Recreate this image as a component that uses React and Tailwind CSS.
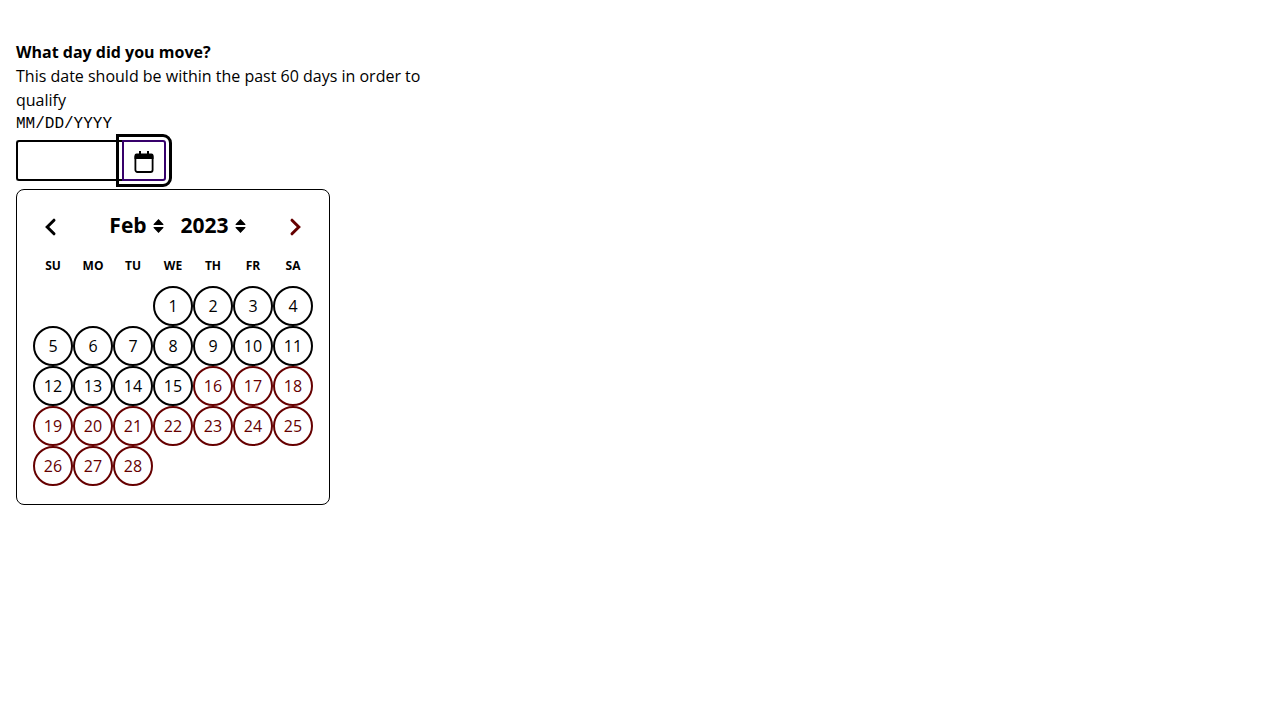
import { useState } from "react";

const MONTHS = ["Jan", "Feb", "Mar", "Apr", "May", "Jun", "Jul", "Aug", "Sep", "Oct", "Nov", "Dec"];
const YEARS = ["2022", "2023"];
const WEEKDAYS = ["SU", "MO", "TU", "WE", "TH", "FR", "SA"];
const WEEKS = [
  [null, null, null, 1, 2, 3, 4],
  [5, 6, 7, 8, 9, 10, 11],
  [12, 13, 14, 15, 16, 17, 18],
  [19, 20, 21, 22, 23, 24, 25],
  [26, 27, 28, null, null, null, null],
];
const LAST_AVAILABLE = 15;

function CalendarIcon() {
  return (
    <svg viewBox="0 0 20 22" className="h-[22px] w-5" fill="none" aria-hidden="true">
      <rect x="1.4" y="4" width="17.2" height="17" rx="2" stroke="currentColor" strokeWidth="1.8" />
      <path d="M0.5 8V4.500a2 2 0 0 1 2-2h15a2 2 0 0 1 2 2V8z" fill="currentColor" />
      <path d="M6 0V5M14 0V5" stroke="currentColor" strokeWidth="2" />
    </svg>
  );
}

function Chevron({ direction }) {
  return (
    <svg viewBox="0 0 12 18" className="h-[18px] w-3" fill="none" aria-hidden="true">
      <path
        d={direction === "left" ? "M9 2.200 2.200 9l6.800 6.800" : "M3 2.200 9.800 9l-6.800 6.800"}
        stroke="currentColor"
        strokeWidth="3"
        strokeLinecap="round"
      />
    </svg>
  );
}

function SortIcon() {
  return (
    <svg viewBox="0 0 12 14" className="h-3.5 w-3" fill="currentColor" aria-hidden="true">
      <path d="M5.500 0 10.500 5.200Q10.700 6 9.900 6H1.100Q0.300 6 0.500 5.200zM5.500 14 10.500 8.800Q10.700 8 9.900 8H1.100Q0.300 8 0.500 8.800z" />
    </svg>
  );
}

function PickerSelect({ label, value, options, onChange }) {
  return (
    <div className="flex items-center gap-1.5">
      <select
        aria-label={label}
        value={value}
        onChange={(e) => onChange(e.target.value)}
        className="field-sizing-content h-9 appearance-none bg-transparent text-[21px] leading-normal font-bold"
      >
        {options.map((o) => (
          <option key={o}>{o}</option>
        ))}
      </select>
      <SortIcon />
    </div>
  );
}

export default function App() {
  const [date, setDate] = useState("");
  const [month, setMonth] = useState("Feb");
  const [year, setYear] = useState("2023");

  return (
    <main className="max-w-[460px] px-4 pt-10 font-['Open_Sans','Noto_Sans',sans-serif] text-base text-black">
      <label htmlFor="move-date" className="block font-bold">What day did you move?</label>
      <p>This date should be within the past 60 days in order to qualify</p>
      <p className="font-['Liberation_Mono',monospace]">MM/DD/YYYY</p>

      <div className="mt-1 flex h-[41px]">
        <input
          id="move-date"
          type="text"
          value={date}
          onChange={(e) => setDate(e.target.value)}
          className="w-[106px] rounded-l-[3px] border-2 border-r-0 border-black px-2 outline-none"
        />
        <button
          type="button"
          aria-label="Toggle calendar"
          className="flex w-11 items-center justify-center rounded-r-[3px] border-2 border-[#36006b] pt-0.5 outline-3 outline-offset-3 outline-black"
        >
          <CalendarIcon />
        </button>
      </div>

      <section aria-label="Calendar" className="mt-2 w-fit rounded-lg border border-black px-4 pt-4 pb-[18px]">
        <div className="flex h-10 items-center justify-between">
          <button type="button" aria-label="Previous month" className="flex size-9 items-center justify-center pt-0.5">
            <Chevron direction="left" />
          </button>
          <div className="flex gap-4 pl-2.5">
            <PickerSelect label="Month" value={month} options={MONTHS} onChange={setMonth} />
            <PickerSelect label="Year" value={year} options={YEARS} onChange={setYear} />
          </div>
          <button type="button" aria-label="Next month" className="flex size-9 items-center justify-center pt-0.5 text-[#660000]">
            <Chevron direction="right" />
          </button>
        </div>
        <table className="border-collapse text-center">
          <thead>
            <tr>
              {WEEKDAYS.map((d) => (
                <th key={d} scope="col" className="size-10 p-0 text-xs font-bold">{d}</th>
              ))}
            </tr>
          </thead>
          <tbody>
            {WEEKS.map((week, i) => (
              <tr key={i}>
                {week.map((day, j) => (
                  <td key={j} className="size-10 p-0">
                    {day && (
                      <button
                        type="button"
                        className={`block size-10 rounded-full border-2 ${
                          day > LAST_AVAILABLE ? "border-[#660000] text-[#660000]" : "border-black"
                        }`}
                      >
                        {day}
                      </button>
                    )}
                  </td>
                ))}
              </tr>
            ))}
          </tbody>
        </table>
      </section>
    </main>
  );
}
